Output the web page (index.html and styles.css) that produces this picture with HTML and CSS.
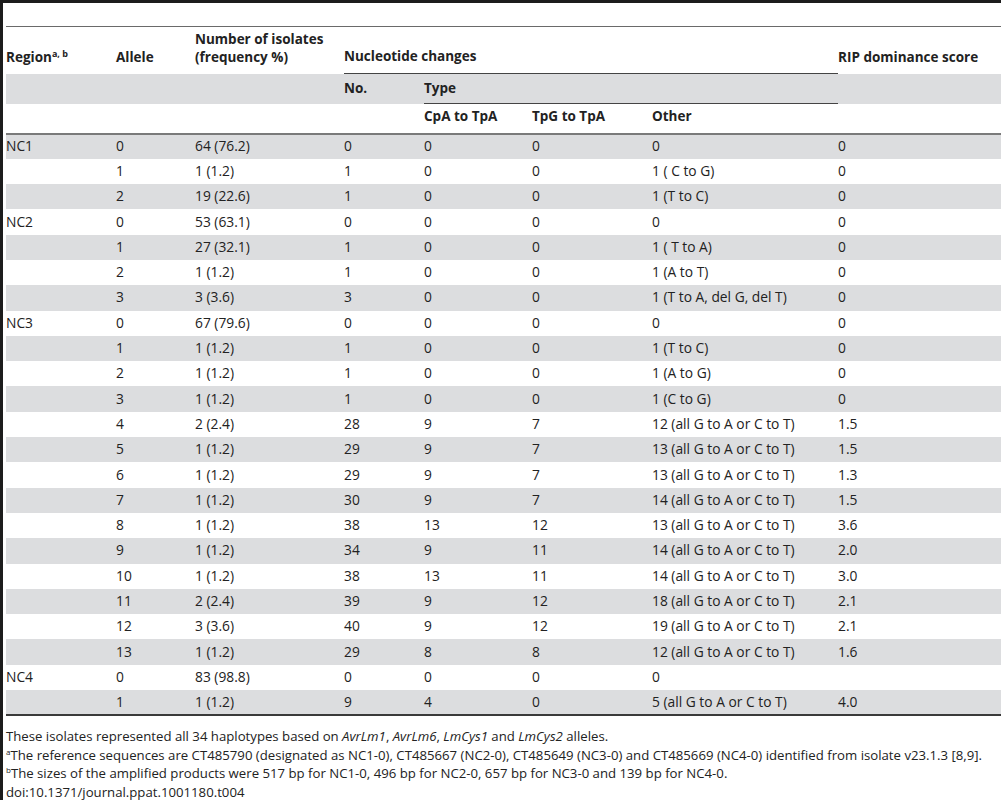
FILE: index.html
```html
<!DOCTYPE html>
<html lang="en">
<head>
  <meta charset="UTF-8">
  <title>Table 4 - Nucleotide changes</title>
  <link rel="stylesheet" href="styles.css">
</head>
<body>
  <div class="page">
    <table class="data-table">
      <colgroup>
        <col class="c-region">
        <col class="c-allele">
        <col class="c-num">
        <col class="c-no">
        <col class="c-cpa">
        <col class="c-tpg">
        <col class="c-other">
        <col class="c-rip">
      </colgroup>
      <thead>
        <tr class="head-top">
          <th>Region<sup>a, b</sup></th>
          <th>Allele</th>
          <th>Number of isolates<br>(frequency %)</th>
          <th colspan="4" class="span-line">Nucleotide changes</th>
          <th>RIP dominance score</th>
        </tr>
        <tr class="head-mid">
          <th></th>
          <th></th>
          <th></th>
          <th>No.</th>
          <th colspan="3" class="span-line">Type</th>
          <th></th>
        </tr>
        <tr class="head-low">
          <th></th>
          <th></th>
          <th></th>
          <th></th>
          <th>CpA to TpA</th>
          <th>TpG to TpA</th>
          <th>Other</th>
          <th></th>
        </tr>
      </thead>
      <tbody>
        <tr><td>NC1</td><td>0</td><td>64 (76.2)</td><td>0</td><td>0</td><td>0</td><td>0</td><td>0</td></tr>
        <tr><td></td><td>1</td><td>1 (1.2)</td><td>1</td><td>0</td><td>0</td><td>1 ( C to G)</td><td>0</td></tr>
        <tr><td></td><td>2</td><td>19 (22.6)</td><td>1</td><td>0</td><td>0</td><td>1 (T to C)</td><td>0</td></tr>
        <tr><td>NC2</td><td>0</td><td>53 (63.1)</td><td>0</td><td>0</td><td>0</td><td>0</td><td>0</td></tr>
        <tr><td></td><td>1</td><td>27 (32.1)</td><td>1</td><td>0</td><td>0</td><td>1 ( T to A)</td><td>0</td></tr>
        <tr><td></td><td>2</td><td>1 (1.2)</td><td>1</td><td>0</td><td>0</td><td>1 (A to T)</td><td>0</td></tr>
        <tr><td></td><td>3</td><td>3 (3.6)</td><td>3</td><td>0</td><td>0</td><td>1 (T to A, del G, del T)</td><td>0</td></tr>
        <tr><td>NC3</td><td>0</td><td>67 (79.6)</td><td>0</td><td>0</td><td>0</td><td>0</td><td>0</td></tr>
        <tr><td></td><td>1</td><td>1 (1.2)</td><td>1</td><td>0</td><td>0</td><td>1 (T to C)</td><td>0</td></tr>
        <tr><td></td><td>2</td><td>1 (1.2)</td><td>1</td><td>0</td><td>0</td><td>1 (A to G)</td><td>0</td></tr>
        <tr><td></td><td>3</td><td>1 (1.2)</td><td>1</td><td>0</td><td>0</td><td>1 (C to G)</td><td>0</td></tr>
        <tr><td></td><td>4</td><td>2 (2.4)</td><td>28</td><td>9</td><td>7</td><td>12 (all G to A or C to T)</td><td>1.5</td></tr>
        <tr><td></td><td>5</td><td>1 (1.2)</td><td>29</td><td>9</td><td>7</td><td>13 (all G to A or C to T)</td><td>1.5</td></tr>
        <tr><td></td><td>6</td><td>1 (1.2)</td><td>29</td><td>9</td><td>7</td><td>13 (all G to A or C to T)</td><td>1.3</td></tr>
        <tr><td></td><td>7</td><td>1 (1.2)</td><td>30</td><td>9</td><td>7</td><td>14 (all G to A or C to T)</td><td>1.5</td></tr>
        <tr><td></td><td>8</td><td>1 (1.2)</td><td>38</td><td>13</td><td>12</td><td>13 (all G to A or C to T)</td><td>3.6</td></tr>
        <tr><td></td><td>9</td><td>1 (1.2)</td><td>34</td><td>9</td><td>11</td><td>14 (all G to A or C to T)</td><td>2.0</td></tr>
        <tr><td></td><td>10</td><td>1 (1.2)</td><td>38</td><td>13</td><td>11</td><td>14 (all G to A or C to T)</td><td>3.0</td></tr>
        <tr><td></td><td>11</td><td>2 (2.4)</td><td>39</td><td>9</td><td>12</td><td>18 (all G to A or C to T)</td><td>2.1</td></tr>
        <tr><td></td><td>12</td><td>3 (3.6)</td><td>40</td><td>9</td><td>12</td><td>19 (all G to A or C to T)</td><td>2.1</td></tr>
        <tr><td></td><td>13</td><td>1 (1.2)</td><td>29</td><td>8</td><td>8</td><td>12 (all G to A or C to T)</td><td>1.6</td></tr>
        <tr><td>NC4</td><td>0</td><td>83 (98.8)</td><td>0</td><td>0</td><td>0</td><td>0</td><td></td></tr>
        <tr><td></td><td>1</td><td>1 (1.2)</td><td>9</td><td>4</td><td>0</td><td>5 (all G to A or C to T)</td><td>4.0</td></tr>
      </tbody>
    </table>
    <div class="notes">
      <p>These isolates represented all 34 haplotypes based on <i>AvrLm1</i>, <i>AvrLm6</i>, <i>LmCys1</i> and <i>LmCys2</i> alleles.</p>
      <p><sup>a</sup>The reference sequences are CT485790 (designated as NC1-0), CT485667 (NC2-0), CT485649 (NC3-0) and CT485669 (NC4-0) identified from isolate v23.1.3 [8,9].</p>
      <p><sup>b</sup>The sizes of the amplified products were 517 bp for NC1-0, 496 bp for NC2-0, 657 bp for NC3-0 and 139 bp for NC4-0.</p>
      <p>doi:10.1371/journal.ppat.1001180.t004</p>
    </div>
  </div>
</body>
</html>
```

FILE: styles.css
```css
body {
  margin: 0;
  font-family: "Open Sans", "Liberation Sans", sans-serif;
  font-size: 13px;
  color: #222;
  background: #fff;
}
.page {
  border-top: 3px solid #1c1c1c;
  border-left: 3px solid #1c1c1c;
  min-height: 797px;
  padding-left: 3px;
  box-sizing: border-box;
}
.data-table {
  width: 995px;
  margin-top: 23px;
  border-collapse: collapse;
  table-layout: fixed;
  border-top: 1px solid #6a6a6a;
  border-bottom: 2px solid #3a3a3a;
  font-size: 13.8px;
}
.c-region { width: 110px; }
.c-allele { width: 79px; }
.c-num { width: 149px; }
.c-no { width: 80px; }
.c-cpa { width: 108px; }
.c-tpg { width: 120px; }
.c-other { width: 186px; }
.c-rip { width: 163px; }

th, td {
  padding: 0;
  text-align: left;
  line-height: 18px;
  white-space: nowrap;
}
th {
  font-weight: bold;
  font-size: 13.5px;
}
sup {
  font-size: 9px;
  line-height: 0;
  vertical-align: 5px;
}
.head-top th {
  height: 47px;
  vertical-align: bottom;
  padding-bottom: 8px;
  box-sizing: border-box;
}
.head-top .span-line,
.head-mid .span-line {
  border-bottom: 1px solid #444;
}
.head-mid th {
  background: #dcdddf;
  height: 30px;
  padding-bottom: 2px;
  box-sizing: border-box;
}
.head-low th {
  height: 30px;
  padding-bottom: 4px;
  box-sizing: border-box;
  border-bottom: 2px solid #7a7a7a;
}
tbody td {
  height: 25.3px;
  padding-bottom: 1px;
  box-sizing: border-box;
}
tbody tr:nth-child(odd) td {
  background: #dcdddf;
}
.notes {
  padding-top: 11px;
  font-size: 13.2px;
}
.notes p {
  margin: 0;
  line-height: 18.4px;
}
.notes sup {
  font-size: 8px;
  vertical-align: 5px;
}
```
